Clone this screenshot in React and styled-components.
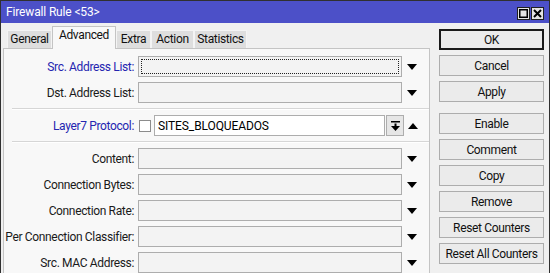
import React from 'react';
import styled, { createGlobalStyle } from 'styled-components';

const GlobalStyle = createGlobalStyle`
  html, body {
    margin: 0;
    padding: 0;
    background: #f0f0f0;
  }
  * {
    box-sizing: border-box;
  }
`;

const COLORS = {
  title: '#4c50c8',
  bg: '#f0f0f0',
  panel: '#f8f8f8',
  border: '#adadad',
  blue: '#2525b0',
};

const Window = styled.div`
  width: 550px;
  height: 273px;
  overflow: hidden;
  border: 1px solid #303030;
  border-bottom: none;
  background: ${COLORS.bg};
  font-family: Roboto, 'Liberation Sans', Arial, sans-serif;
  font-size: 12px;
  letter-spacing: -0.35px;
  color: #1a1a1a;
  display: flex;
  flex-direction: column;
`;

const TitleBar = styled.div`
  flex-shrink: 0;
  height: 22px;
  background: ${COLORS.title};
  color: #fff;
  display: flex;
  align-items: center;
  justify-content: space-between;
  padding: 0 5px 0 5px;
  letter-spacing: -0.15px;
`;

const TitleButtons = styled.div`
  display: flex;
  gap: 1px;
  margin-top: 2px;
`;

const TitleButton = styled.div`
  width: 13px;
  height: 13px;
  background: #e4e4e4;
  border: 1px solid #202020;
  display: flex;
  align-items: center;
  justify-content: center;
`;

const Body = styled.div`
  flex-shrink: 0;
  display: flex;
`;

const LeftPane = styled.div`
  margin-left: 2px;
  width: 427px;
  display: flex;
  flex-direction: column;
`;

const TabStrip = styled.div`
  flex-shrink: 0;
  height: 25px;
  display: flex;
  align-items: flex-end;
  padding-left: 4px;
  position: relative;
  z-index: 1;
`;

const Tab = styled.div`
  width: ${(p) => p.w}px;
  height: ${(p) => (p.active ? 23 : 18)}px;
  margin-bottom: ${(p) => (p.active ? -1 : 0)}px;
  background: ${(p) => (p.active ? COLORS.panel : '#dedede')};
  border: 1px solid ${(p) => (p.active ? '#c4c4c4' : '#f4f4f4')};
  border-bottom: none;
  display: flex;
  justify-content: center;
  padding-top: 1px;
  color: #111;
`;

const Panel = styled.div`
  flex-shrink: 0;
  background: ${COLORS.panel};
  border: 1px solid #c4c4c4;
  border-bottom: none;
  padding-top: 7px;
`;

const Row = styled.div`
  height: 21px;
  margin-bottom: 5px;
  display: flex;
  align-items: center;
`;

const Label = styled.div`
  width: 130px;
  margin-right: 4px;
  text-align: right;
  white-space: nowrap;
  color: ${(p) => (p.blue ? COLORS.blue : '#1a1a1a')};
`;

const Field = styled.div`
  width: ${(p) => p.w || 264}px;
  height: 21px;
  border: 1px solid ${COLORS.border};
  background: ${(p) => (p.white ? '#ffffff' : '#f3f3f3')};
  padding: 2px;
  display: flex;
  align-items: center;
  color: #000;
`;

const FocusRing = styled.div`
  width: 100%;
  height: 100%;
  border: 1px dotted #222;
`;

const FieldText = styled.span`
  padding-left: 1px;
  letter-spacing: -0.1px;
`;

const Check = styled.div`
  width: 12px;
  height: 12px;
  margin: 0 3px 0 1px;
  border: 1px solid #8c8c8c;
  background: #fff;
`;

const SmallButton = styled.div`
  width: 18px;
  height: 21px;
  margin-left: 1px;
  margin-right: -1px;
  border: 1px solid ${COLORS.border};
  background: #e6e6e6;
  display: flex;
  align-items: center;
  justify-content: center;
`;

const ArrowCell = styled.div`
  width: 20px;
  display: flex;
  justify-content: center;
  align-items: center;
`;

const Separator = styled.div`
  height: 1px;
  margin: 2px 0 6px 8px;
  background: #d6d6d6;
  box-shadow: 0 1px 0 #ffffff;
`;

const ButtonColumn = styled.div`
  padding: 6px 0 0 9px;
  display: flex;
  flex-direction: column;
  gap: 5px;
`;

const Button = styled.div`
  width: 105px;
  height: 21px;
  margin-top: ${(p) => (p.spaced ? 6 : 0)}px;
  border: ${(p) => (p.primary ? '2px solid #1a1a1a' : `1px solid ${COLORS.border}`)};
  background: #ebebeb;
  display: flex;
  align-items: center;
  justify-content: center;
  color: #111;
`;

const DownArrow = () => (
  <svg width="10" height="6" viewBox="0 0 10 6">
    <polygon points="0,0 10,0 5,6" fill="#000" />
  </svg>
);

const UpArrow = () => (
  <svg width="10" height="6" viewBox="0 0 10 6">
    <polygon points="0,6 10,6 5,0" fill="#000" />
  </svg>
);

const DropAllIcon = () => (
  <svg width="9" height="10" viewBox="0 0 9 10">
    <rect x="0" y="0" width="9" height="1.5" fill="#000" />
    <rect x="3.5" y="2.5" width="2" height="3" fill="#000" />
    <polygon points="0,5 9,5 4.5,10" fill="#000" />
  </svg>
);

const MaxIcon = () => (
  <svg width="9" height="9" viewBox="0 0 9 9">
    <rect x="0.75" y="0.75" width="7.5" height="7.5" fill="none" stroke="#000" strokeWidth="1.5" />
  </svg>
);

const CloseIcon = () => (
  <svg width="9" height="9" viewBox="0 0 9 9">
    <path d="M1 1 L8 8 M8 1 L1 8" stroke="#000" strokeWidth="2" />
  </svg>
);

const tabs = [
  { name: 'General', w: 45 },
  { name: 'Advanced', w: 64, active: true },
  { name: 'Extra', w: 35 },
  { name: 'Action', w: 43 },
  { name: 'Statistics', w: 53 },
];

const lowerRows = [
  'Content:',
  'Connection Bytes:',
  'Connection Rate:',
  'Per Connection Classifier:',
  'Src. MAC Address:',
];

const buttons = [
  { label: 'OK', primary: true },
  { label: 'Cancel' },
  { label: 'Apply' },
  { label: 'Enable', spaced: true },
  { label: 'Comment' },
  { label: 'Copy' },
  { label: 'Remove' },
  { label: 'Reset Counters' },
  { label: 'Reset All Counters' },
];

const App = () => (
  <>
    <GlobalStyle />
    <Window>
      <TitleBar>
        <span>Firewall Rule &lt;53&gt;</span>
        <TitleButtons>
          <TitleButton><MaxIcon /></TitleButton>
          <TitleButton><CloseIcon /></TitleButton>
        </TitleButtons>
      </TitleBar>
      <Body>
        <LeftPane>
          <TabStrip>
            {tabs.map((t) => (
              <Tab key={t.name} w={t.w} active={t.active}>{t.name}</Tab>
            ))}
          </TabStrip>
          <Panel>
            <Row>
              <Label blue>Src. Address List:</Label>
              <Field><FocusRing /></Field>
              <ArrowCell><DownArrow /></ArrowCell>
            </Row>
            <Row>
              <Label>Dst. Address List:</Label>
              <Field />
              <ArrowCell><DownArrow /></ArrowCell>
            </Row>
            <Separator />
            <Row>
              <Label blue>Layer7 Protocol:</Label>
              <Check />
              <Field w={231} white>
                <FieldText>SITES_BLOQUEADOS</FieldText>
              </Field>
              <SmallButton><DropAllIcon /></SmallButton>
              <ArrowCell><UpArrow /></ArrowCell>
            </Row>
            <Separator />
            {lowerRows.map((label) => (
              <Row key={label}>
                <Label>{label}</Label>
                <Field />
                <ArrowCell><DownArrow /></ArrowCell>
              </Row>
            ))}
          </Panel>
        </LeftPane>
        <ButtonColumn>
          {buttons.map((b) => (
            <Button key={b.label} primary={b.primary} spaced={b.spaced}>{b.label}</Button>
          ))}
        </ButtonColumn>
      </Body>
    </Window>
  </>
);

export default App;
